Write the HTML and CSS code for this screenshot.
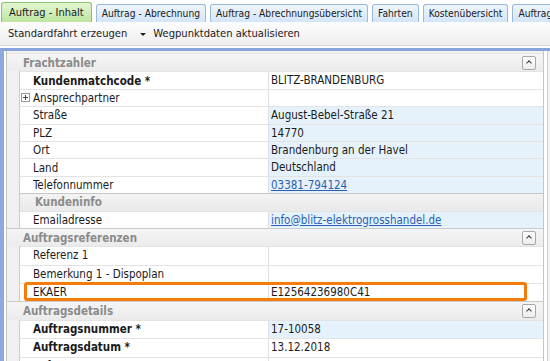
FILE: index.html
```html
<!DOCTYPE html>
<html lang="de">
<head>
    <meta charset="UTF-8">
    <title>Auftrag - Inhalt</title>
    <link rel="stylesheet" href="styles.css">
</head>
<body>
    <div class="tabs">
        <div class="tab active">Auftrag - Inhalt</div>
        <div class="tab">Auftrag - Abrechnung</div>
        <div class="tab">Auftrag - Abrechnungsübersicht</div>
        <div class="tab">Fahrten</div>
        <div class="tab">Kostenübersicht</div>
        <div class="tab">Auftragsdokumente</div>
    </div>

    <div class="toolbar">
        <span class="tool">Standardfahrt erzeugen</span>
        <span class="tool-arrow"></span>
        <span class="tool">Wegpunktdaten aktualisieren</span>
    </div>

    <div class="page">
        <div class="grid">
            <!-- Frachtzahler -->
            <div class="group compact">
                <div class="group-head">
                    <span>Frachtzahler</span>
                    <span class="collapse"></span>
                </div>
                <div class="rows">
                    <div class="row">
                        <div class="label bold"><i class="slot"></i>Kundenmatchcode *</div>
                        <div class="value">BLITZ-BRANDENBURG</div>
                    </div>
                    <div class="row">
                        <div class="label"><i class="slot"><span class="expand"></span></i>Ansprechpartner</div>
                        <div class="value"></div>
                    </div>
                    <div class="row">
                        <div class="label"><i class="slot"></i>Straße</div>
                        <div class="value filled">August-Bebel-Straße 21</div>
                    </div>
                    <div class="row">
                        <div class="label"><i class="slot"></i>PLZ</div>
                        <div class="value filled">14770</div>
                    </div>
                    <div class="row">
                        <div class="label"><i class="slot"></i>Ort</div>
                        <div class="value filled">Brandenburg an der Havel</div>
                    </div>
                    <div class="row">
                        <div class="label"><i class="slot"></i>Land</div>
                        <div class="value filled">Deutschland</div>
                    </div>
                    <div class="row">
                        <div class="label"><i class="slot"></i>Telefonnummer</div>
                        <div class="value filled"><a href="#">03381-794124</a></div>
                    </div>
                    <div class="row subhead">Kundeninfo</div>
                    <div class="row">
                        <div class="label"><i class="slot"></i>Emailadresse</div>
                        <div class="value filled"><a href="#">info@blitz-elektrogrosshandel.de</a></div>
                    </div>
                </div>
            </div>

            <!-- Auftragsreferenzen -->
            <div class="group">
                <div class="group-head">
                    <span>Auftragsreferenzen</span>
                    <span class="collapse"></span>
                </div>
                <div class="rows">
                    <div class="row">
                        <div class="label"><i class="slot"></i>Referenz 1</div>
                        <div class="value"></div>
                    </div>
                    <div class="row">
                        <div class="label"><i class="slot"></i>Bemerkung 1 - Dispoplan</div>
                        <div class="value"></div>
                    </div>
                    <div class="row marked">
                        <div class="label"><i class="slot"></i>EKAER</div>
                        <div class="value">E12564236980C41</div>
                        <div class="highlight"></div>
                    </div>
                </div>
            </div>

            <!-- Auftragsdetails -->
            <div class="group">
                <div class="group-head">
                    <span>Auftragsdetails</span>
                    <span class="collapse"></span>
                </div>
                <div class="rows">
                    <div class="row">
                        <div class="label bold"><i class="slot"></i>Auftragsnummer *</div>
                        <div class="value filled">17-10058</div>
                    </div>
                    <div class="row">
                        <div class="label bold"><i class="slot"></i>Auftragsdatum *</div>
                        <div class="value">13.12.2018</div>
                    </div>
                    <div class="row">
                        <div class="label"><i class="slot"></i>Auftragsart</div>
                        <div class="value"></div>
                    </div>
                </div>
            </div>
        </div>
        <div class="scrollbar"></div>
    </div>
</body>
</html>
```

FILE: styles.css
```css
body {
    font-family: "DejaVu Sans Condensed", "DejaVu Sans", sans-serif;
    font-size: 11.5px;
    color: #1b1b1b;
    margin: 0;
    background: #fff;
    overflow: hidden;
}

/* tabs */
.tabs {
    display: flex;
    align-items: flex-end;
    gap: 4px;
    height: 22px;
    padding-left: 1px;
    white-space: nowrap;
    overflow: hidden;
    font-size: 10.2px;
}
.tab {
    height: 17px;
    line-height: 17px;
    padding: 0 5px;
    background: linear-gradient(#eef5fd, #d3e5f8);
    border: 1px solid #9cb8d8;
    border-bottom: none;
    border-radius: 3px 3px 0 0;
}
.tab.active {
    height: 19px;
    line-height: 19px;
    padding: 0 7px;
    font-size: 11px;
    background: linear-gradient(#e2f6d2, #bde5a0);
    border-color: #86c36a;
}

/* toolbar */
.toolbar {
    display: flex;
    align-items: center;
    height: 23px;
    padding-left: 8px;
    font-size: 11.1px;
    background: linear-gradient(#fdfdfd, #efefef);
    border-bottom: 1px solid #d6d6d6;
    margin-bottom: 2px;
}
.tool-arrow {
    width: 0;
    height: 0;
    margin: 1px 7px 0 13px;
    border-left: 3px solid transparent;
    border-right: 3px solid transparent;
    border-top: 3px solid #222;
}

/* page frame */
.page {
    display: flex;
    border-top: 3px solid #86a3dc;
    border-left: 4px solid #8ea9de;
    padding-left: 2px;
    height: 320px;
}
.grid {
    flex: 1;
    border-left: 1px solid #c6c6c6;
    border-right: 1px solid #c6c6c6;
    background: #f0f0f0;
    padding-top: 2px;
}
.scrollbar {
    width: 2px;
    margin-left: 3px;
    border-left: 1px solid #cfcfcf;
    background: #f2f2f2;
}

/* groups */
.group-head {
    display: flex;
    align-items: center;
    justify-content: space-between;
    height: 18.4px;
    box-sizing: border-box;
    padding: 0 7px 0 16px;
    border-top: 1px solid #cacaca;
    background: linear-gradient(#f5f5f5, #ebebeb);
    color: #8b8b8b;
    font-weight: bold;
}
.group:first-child .group-head {
    border-top-color: #e4e4e4;
}
.collapse {
    position: relative;
    width: 12px;
    height: 12px;
    border: 1px solid #a9a9a9;
    border-radius: 2px;
    background: linear-gradient(#ffffff, #ececec);
}
.collapse::after {
    content: "";
    position: absolute;
    left: 4px;
    top: 4px;
    width: 3px;
    height: 3px;
    border-left: 1px solid #333;
    border-top: 1px solid #333;
    transform: rotate(45deg);
}

.rows {
    margin-left: 12px;
    border-left: 1px solid #cdcdcd;
    background: #fff;
}
.row {
    position: relative;
    display: flex;
    height: 18.4px;
    box-sizing: border-box;
    border-top: 1px solid #e3e3e3;
    line-height: 17px;
    white-space: nowrap;
}
.compact .row {
    height: 17.4px;
    line-height: 16px;
}
.label {
    display: flex;
    align-items: center;
    width: 249px;
    box-sizing: border-box;
    border-right: 1px solid #dedede;
}
.label.bold {
    font-weight: bold;
}
.slot {
    display: flex;
    align-items: center;
    width: 13px;
    height: 100%;
}
.expand {
    position: relative;
    width: 7px;
    height: 7px;
    margin-left: 1px;
    border: 1px solid #9a9a9a;
    background: #fff;
}
.expand::before,
.expand::after {
    content: "";
    position: absolute;
    background: #444;
}
.expand::before {
    left: 1px;
    top: 3px;
    width: 5px;
    height: 1px;
}
.expand::after {
    left: 3px;
    top: 1px;
    width: 1px;
    height: 5px;
}
.value {
    flex: 1;
    padding-left: 2px;
}
.value.filled {
    background: #e5f2fb;
}
.value a {
    color: #2b5fb4;
}
.row.subhead {
    padding-left: 15px;
    background: linear-gradient(#f3f3f3, #e9e9e9);
    border-top-color: #c6c6c6;
    color: #8b8b8b;
    font-weight: bold;
}

/* orange annotation over the EKAER row */
.highlight {
    position: absolute;
    left: 4px;
    right: 16px;
    top: -2px;
    bottom: 0;
    border: 3px solid #f57b0a;
    border-radius: 3px;
}
```
